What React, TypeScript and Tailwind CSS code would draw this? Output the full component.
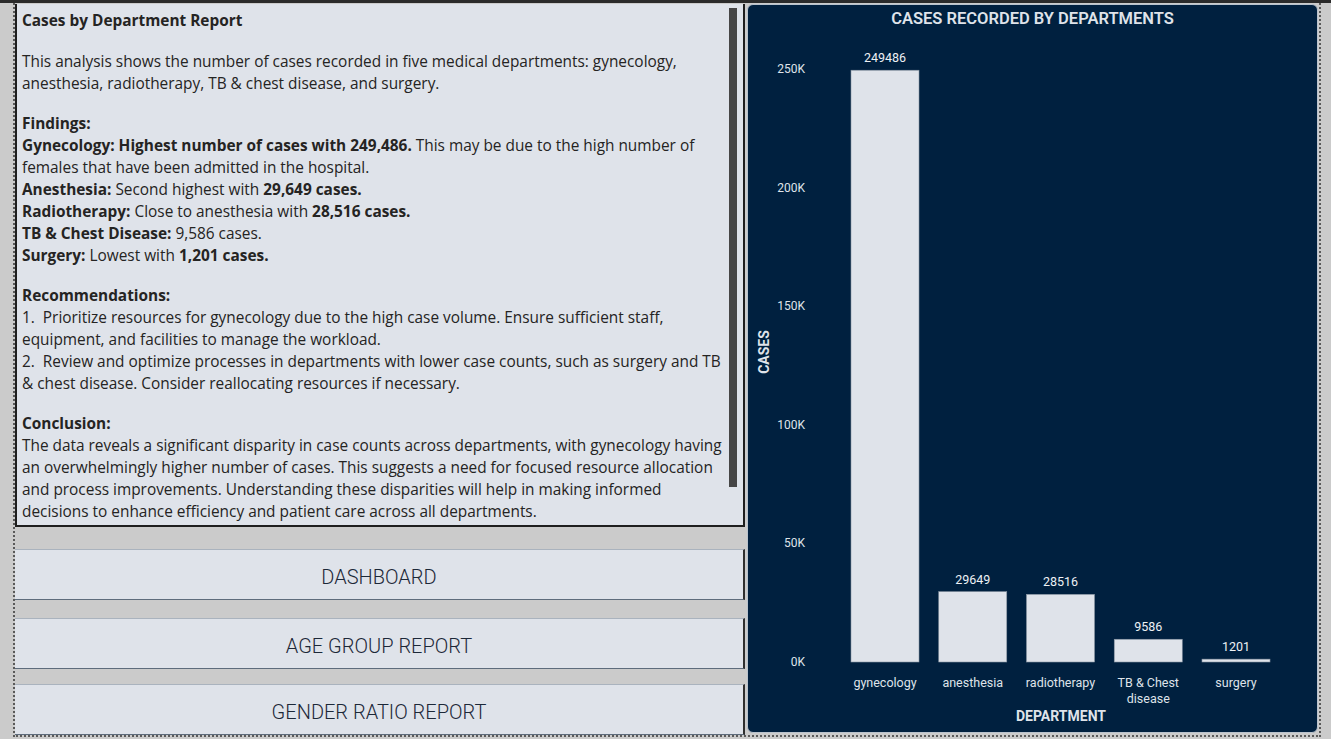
import React from 'react';

const bars = [
  { name: 'gynecology', value: 249486 },
  { name: 'anesthesia', value: 29649 },
  { name: 'radiotherapy', value: 28516 },
  { name: 'TB & Chest|disease', value: 9586 },
  { name: 'surgery', value: 1201 },
];

const ticks = ['250K', '200K', '150K', '100K', '50K', '0K'];

const BASE = 629;
const SCALE = 593 / 250000;

function Chart() {
  return (
    <div className="flex h-[729px] w-[571px] flex-col overflow-hidden rounded-[6px] border border-[#b9c2cc] bg-[#00203f]">
      <div className="flex h-[28px] items-center justify-center text-[16.5px] font-semibold text-[#dfe3ea]">
        CASES RECORDED BY DEPARTMENTS
      </div>
      <svg width="569" height="699" className="block" style={{ fontFamily: 'Roboto, sans-serif' }}>
        {ticks.map((t, i) => (
          <text key={t} x="57" y={36 + i * 118.6 + 4} textAnchor="end" fontSize="12" fill="#dfe3ea">
            {t}
          </text>
        ))}
        <text
          x="0"
          y="0"
          transform="translate(21 319) rotate(-90)"
          textAnchor="middle"
          fontSize="14"
          fontWeight="700"
          fill="#dfe3ea"
        >
          CASES
        </text>
        {bars.map((b, i) => {
          const x = 103 + i * 87.75;
          const h = Math.max(b.value * SCALE, 2.5);
          const top = BASE - h;
          const lines = b.name.split('|');
          return (
            <g key={b.name}>
              <rect x={x} y={top} width="68" height={h} fill="#dfe3ea" stroke="#8a96a4" strokeWidth="0.6" />
              <text x={x + 34} y={top - 8} textAnchor="middle" fontSize="12.5" fill="#eef1f5">
                {b.value}
              </text>
              {lines.map((l, j) => (
                <text key={l} x={x + 34} y={654 + j * 16} textAnchor="middle" fontSize="12.5" fill="#dfe3ea">
                  {l}
                </text>
              ))}
            </g>
          );
        })}
        <text x="313" y="688" textAnchor="middle" fontSize="14" fontWeight="700" fill="#dfe3ea">
          DEPARTMENT
        </text>
      </svg>
    </div>
  );
}

function NavButton({ label }: { label: string }) {
  return (
    <div className="flex h-[51px] items-center justify-center border-t border-b border-r-2 border-t-[#aab3be] border-b-[#5e6c7c] border-r-[#2f2f2f] bg-[#dfe3ea] pt-[5px] text-[20px] font-light text-[#1c2838]">
      {label}
    </div>
  );
}

export default function App() {
  return (
    <div
      className="h-[739px] w-[1331px] overflow-hidden border-t-[3px] border-[#2b2b2b] bg-[#cbcbcb]"
      style={{ fontFamily: '"Open Sans", sans-serif' }}
    >
      <div className="ml-[13px] flex h-[734px] w-[1308px] border-2 border-t-0 border-dotted border-[#5a5a5a] pt-px">
        {/* LEFT */}
        <div className="flex w-[730px] flex-col">
          <div className="relative h-[523px] border-2 border-t-0 border-[#1e1e1e] bg-[#dfe3ea] pl-[5px] pt-[6px] text-[15.4px] leading-[22px] whitespace-nowrap text-[#252423]">
            <div className="absolute top-[4px] left-[712px] h-[479px] w-[8px] bg-[#464646]" />
            <p className="font-bold">Cases by Department Report</p>

            <p className="mt-[19px]">
              This analysis shows the number of cases recorded in five medical departments: gynecology,
              <br />
              anesthesia, radiotherapy, TB &amp; chest disease, and surgery.
            </p>

            <div className="mt-[18px]">
              <p className="font-bold">Findings:</p>
              <p>
                <b>Gynecology: Highest number of cases with 249,486.</b> This may be due to the high number of
              </p>
              <p>females that have been admitted in the hospital.</p>
              <p>
                <b>Anesthesia:</b> Second highest with <b>29,649 cases.</b>
              </p>
              <p>
                <b>Radiotherapy:</b> Close to anesthesia with <b>28,516 cases.</b>
              </p>
              <p>
                <b>TB &amp; Chest Disease:</b> 9,586 cases.
              </p>
              <p>
                <b>Surgery:</b> Lowest with <b>1,201 cases.</b>
              </p>
            </div>

            <div className="mt-[18px]">
              <p className="font-bold">Recommendations:</p>
              <p>1.&nbsp; Prioritize resources for gynecology due to the high case volume. Ensure sufficient staff,</p>
              <p>equipment, and facilities to manage the workload.</p>
              <p>2.&nbsp; Review and optimize processes in departments with lower case counts, such as surgery and TB</p>
              <p>&amp; chest disease. Consider reallocating resources if necessary.</p>
            </div>

            <div className="mt-[18px]">
              <p className="font-bold">Conclusion:</p>
              <p>The data reveals a significant disparity in case counts across departments, with gynecology having</p>
              <p>an overwhelmingly higher number of cases. This suggests a need for focused resource allocation</p>
              <p>and process improvements. Understanding these disparities will help in making informed</p>
              <p>decisions to enhance efficiency and patient care across all departments.</p>
            </div>
          </div>

          <div className="mt-[22px] flex flex-col gap-[18px]" style={{ fontFamily: 'Roboto, sans-serif' }}>
            <NavButton label="DASHBOARD" />
            <NavButton label="AGE GROUP REPORT" />
          </div>
          <div className="mt-[15px]" style={{ fontFamily: 'Roboto, sans-serif' }}>
            <NavButton label="GENDER RATIO REPORT" />
          </div>
        </div>

        {/* CHART */}
        <div className="ml-[2px]" style={{ fontFamily: 'Roboto, sans-serif' }}>
          <Chart />
        </div>
      </div>
    </div>
  );
}
